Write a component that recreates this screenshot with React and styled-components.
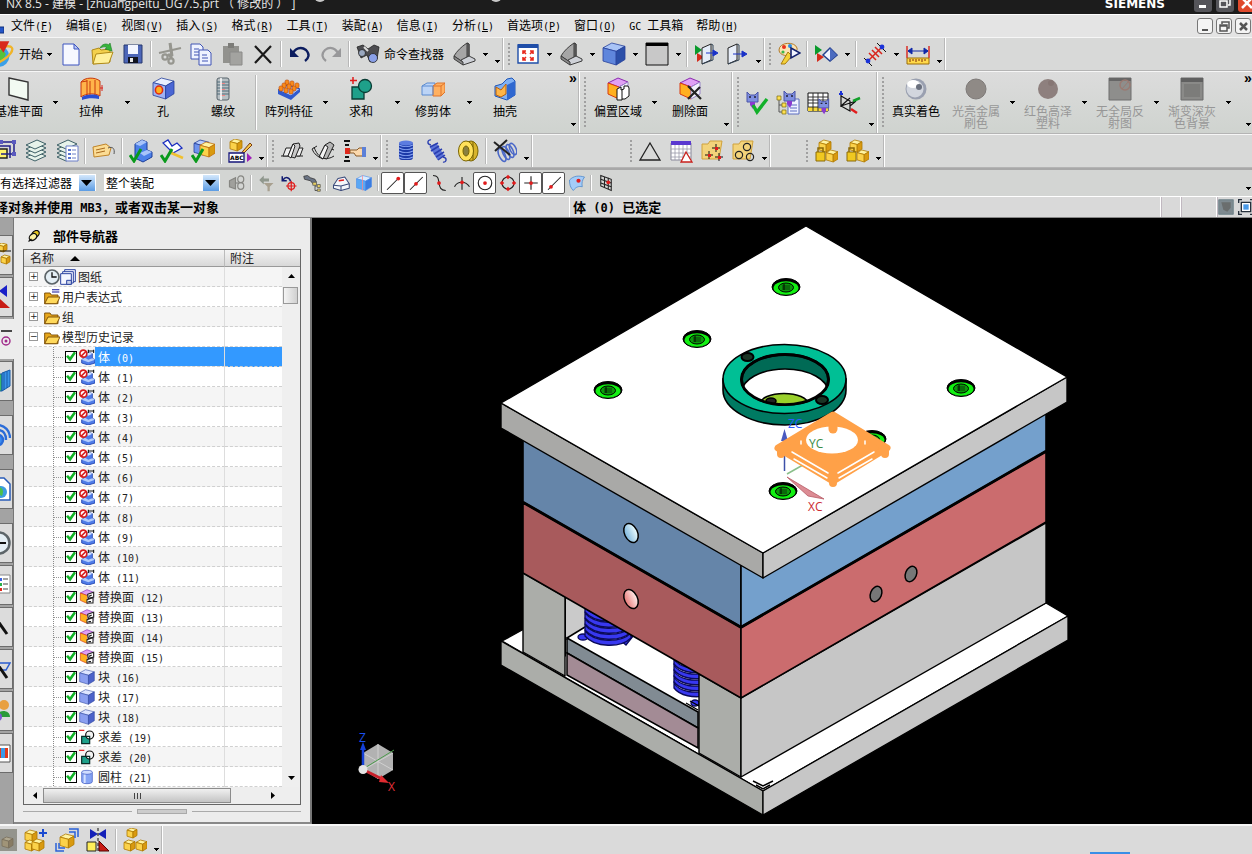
import React, { useState } from "react";
import styled, { createGlobalStyle, css } from "styled-components";

const MENUS = [
  ["文件", "F"],
  ["编辑", "E"],
  ["视图", "V"],
  ["插入", "S"],
  ["格式", "R"],
  ["工具", "T"],
  ["装配", "A"],
  ["信息", "I"],
  ["分析", "L"],
  ["首选项", "P"],
  ["窗口", "O"],
  ["GC 工具箱", null],
  ["帮助", "H"],
];

const ROOTS = [
  { name: "图纸", icon: "clock", extra: "sheets" },
  { name: "用户表达式", icon: "folderEq" },
  { name: "组", icon: "folder" },
  { name: "模型历史记录", icon: "folder", open: true },
];

const FEATURES = Array.from({ length: 22 }, (_, i) => {
  if (i < 12) return { name: `体 (${i})`, icon: "body" };
  if (i < 16) return { name: `替换面 (${i})`, icon: "replaceFace" };
  if (i < 19) return { name: `块 (${i})`, icon: "block" };
  if (i < 21) return { name: `求差 (${i})`, icon: "subtract" };
  return { name: `圆柱 (${i})`, icon: "cylinder" };
});

const BLUE = ["#b9cdfb", "#6f93ee", "#3a5cc4"];
const GOLD = ["#fff3a0", "#fbd24a", "#d99a10"];

// Small shaded box used by most of the solid-model icons
function Cube({ x = 0, y = 0, s = 20, c = BLUE, line = "#26409a" }) {
  const p = (...pts) => pts.map(([a, b]) => `${x + a * s},${y + b * s}`).join(" ");
  return (
    <g stroke={line} strokeWidth="0.8" strokeLinejoin="round">
      <polygon fill={c[0]} points={p([0, 0.22], [0.4, 0], [1, 0.15], [0.6, 0.38])} />
      <polygon fill={c[1]} points={p([0, 0.22], [0.6, 0.38], [0.6, 1], [0, 0.82])} />
      <polygon fill={c[2]} points={p([0.6, 0.38], [1, 0.15], [1, 0.75], [0.6, 1])} />
    </g>
  );
}

const goldCube = (x, y, s) => <Cube x={x} y={y} s={s} c={GOLD} line="#b07a00" />;
const greenTick = <path d="M1 16l4 6 7-12" fill="none" stroke="#0a9a1c" strokeWidth="3" />;
const layers = (
  <g fill="#e6f2ea" stroke="#3d5f66" strokeWidth="1">
    <path d="M2 18l9 4 11-5-9-4z" />
    <path d="M2 14l9 4 11-5-9-4z" />
    <path d="M2 10l9 4 11-5-9-4z" />
    <path d="M2 6l9 4 11-5-9-4z" />
  </g>
);
const seat = (
  <g stroke="#3c3c3c" strokeWidth="1" strokeLinejoin="round">
    <path d="M2 14C5 9 9 5 15 1l2 1v12l-8 5z" fill="#a6a6a6" />
    <path d="M15 1l2 1v12l-2 1z" fill="#6c6c6c" />
    <path d="M9 18l8-4 6 3v2l-12 4z" fill="#cfd2d8" />
    <path d="M2 14l9 6v3l-9-6z" fill="#8a8a8a" />
  </g>
);
const flags = (
  <g>
    <path d="M1 3l7 5-7 5z" fill="#0a9a2c" />
    <path d="M3 11l7 4-7 5z" fill="#d42a1a" />
  </g>
);
const faceCube = (
  <g strokeWidth="1" strokeLinejoin="round">
    <path d="M2 6l10-5 10 4-9 5z" fill="#e0a0f4" stroke="#8a2ab0" />
    <path d="M2 6l11 4v12L2 17z" fill="#ffb020" stroke="#d83a10" />
    <path d="M13 10l9-5v12l-9 5z" fill="#f2f2fa" stroke="#9a86c8" />
  </g>
);
const pin = (
  <g>
    <path d="M2 1l3 3h5l3-3v10H2z" fill="#7f8fe0" stroke="#4a55a8" />
    <path d="M4 6h2M9 6h2" stroke="#223" strokeWidth="1.500" />
    <path d="M5 11h5v3l-2 4-3-4z" fill="#8a3ad0" />
  </g>
);
const folder = (
  <g strokeLinejoin="round" strokeWidth="1.400">
    <path d="M1 6h8l2 3h10v13H1z" fill="#e8a81c" stroke="#7a4c04" />
    <path d="M1 22l5-10h18l-5 10z" fill="#ffd95c" stroke="#7a4c04" />
  </g>
);
const goldFolder = <path d="M2 5h6l2-3h12l-3 18H2z" fill="#f3d37a" stroke="#d0a23c" />;

const GLYPHS = {
  app: (
    <g>
      <circle cx="11" cy="14" r="9" fill="#3aa0e8" />
      <path d="M5 10c3-4 9-3 12 2-2 6-5 8-8 9-2-4-2-7-4-11z" fill="#55c23a" />
      <ellipse cx="12" cy="13" rx="12" ry="5" transform="rotate(-32 12 13)" fill="none" stroke="#f0b428" strokeWidth="2" />
      <path d="M8 1h12l-5 10z" fill="#d8281c" />
    </g>
  ),
  menuDot: <path d="M12 13h12v6h-8z" fill="#2456c8" stroke="#10307a" />,
  newFile: (
    <g stroke="#3d55c0" strokeLinejoin="round">
      <path d="M4 2h11l5 5v16H4z" fill="#f6f8ff" />
      <path d="M15 2v5h5z" fill="#b9c6f4" />
    </g>
  ),
  open: (
    <g strokeLinejoin="round">
      <path d="M2 8l7-2 2 2 9-1v13L3 22z" fill="#f3d04c" stroke="#b08a18" />
      <path d="M3 22l3-10 17-2-4 11z" fill="#fff09a" stroke="#b08a18" />
      <path d="M10 6c2-4 6-5 9-3l1-2 2 8-7-2 2-1c-2-2-4-1-7 0z" fill="#35b53a" stroke="#187a20" strokeWidth="0.6" />
    </g>
  ),
  save: (
    <g>
      <path d="M3 3h18v18H3z" fill="#4c66b8" stroke="#26386e" />
      <path d="M7 3h10v9H7z" fill="#f2f5ff" />
      <path d="M7 15h10v6H7z" fill="#10131f" />
      <path d="M9 16h3v4H9z" fill="#e6e6e6" />
    </g>
  ),
  cut: (
    <g fill="none" stroke="#96968f" strokeWidth="2.200">
      <path d="M12 1l2 13M1 11l22-5" />
      <path d="M12 1l2 13M10 12l4 4" strokeWidth="3" />
      <circle cx="7" cy="15" r="2.600" />
      <circle cx="13" cy="19" r="2.600" />
    </g>
  ),
  copy: (
    <g fill="#eef2ff" stroke="#4054b4">
      <path d="M2 2h9l3 3v12H2z" />
      <path d="M5 7h5M5 10h6M5 13h6" />
      <path d="M10 8h9l3 3v12H10z" />
      <path d="M13 13h5M13 16h6M13 19h6" />
    </g>
  ),
  paste: (
    <g fill="#92928e">
      <path d="M3 4h16v17H3z" />
      <path d="M8 1h6v5H8z" fill="#7c7c78" />
      <path d="M10 10h12v13H10z" fill="#a3a3a0" stroke="#8a8a88" />
    </g>
  ),
  remove: <path d="M4 4l16 17M20 4L4 21" stroke="#1a1a1a" strokeWidth="2.2" />,
  undo: (
    <g>
      <path d="M4 13c3-7 9-9 14-5 4 4 3 8-1 11" fill="none" stroke="#0b1c5e" strokeWidth="2.400" />
      <path d="M2 6v9h9z" fill="#0b1c5e" />
    </g>
  ),
  redo: (
    <g>
      <path d="M20 13C17 6 11 4 6 8c-4 4-3 8 1 11" fill="none" stroke="#98989a" strokeWidth="2.200" />
      <path d="M22 6v9h-9z" fill="#98989a" />
    </g>
  ),
  finder: (
    <g stroke="#222" strokeWidth="0.8">
      <path d="M1 5l6-2 5 4 6-4 5 2-2 12-7 3-3-7-6 3z" fill="#4c4c50" />
      <circle cx="17" cy="16" r="4.5" fill="#8aa0e8" />
      <circle cx="6" cy="11" r="3.5" fill="#9aa8c0" />
      <path d="M8 5l4 4" stroke="#ddd" strokeWidth="2" />
    </g>
  ),
  seat,
  fit: (
    <g>
      <path d="M2 3h20v18H2z" fill="#fff" stroke="#1f4ea8" strokeWidth="1.4" />
      <path d="M2 2h20v4H2z" fill="#1f4ea8" />
      <path d="M10 12L7 9m0 3V9h3M14 12l3-3m-3 0h3v3M10 15l-3 3m0-3v3h3M14 15l3 3m-3 0h3v-3" fill="none" stroke="#e8281c" strokeWidth="1.6" />
    </g>
  ),
  cube: <Cube x={1} y={1} s={22} c={["#a9c4f6", "#5f86dc", "#2b4fa8"]} />,
  frame: (
    <g>
      <path d="M1 1h22v22H1z" fill="#c8c8c8" stroke="#111" />
      <path d="M1 1h22v3H1z" fill="#000" />
    </g>
  ),
  planeFlags: (
    <g>
      {flags}
      <path d="M8 6l9-4v16l-9 4z" fill="#e4ecf8" stroke="#222" />
      <path d="M17 2l2 1v15l-11 4" fill="none" stroke="#345" />
      <path d="M12 11h8M19 8l5 3-5 3z" fill="#1a32c8" stroke="#1a32c8" />
    </g>
  ),
  planeArrow: (
    <g>
      <path d="M3 6l9-4v16l-9 4z" fill="#e8eef8" stroke="#222" />
      <path d="M12 2l2 1v15L3 22" fill="none" stroke="#345" />
      <path d="M8 12h10M17 9l5 3-5 3z" fill="#1a32c8" stroke="#1a32c8" />
    </g>
  ),
  palette: (
    <g>
      <path d="M2 8c0-8 16-9 18-2 1 4-4 3-5 6-2 3-13 2-13-4z" fill="#fbe3b4" stroke="#b07a28" />
      <circle cx="7" cy="5" r="2" fill="#e8321c" />
      <circle cx="13" cy="4" r="2" fill="#2a8ce8" />
      <circle cx="6" cy="10" r="1.6" fill="#3ab84a" />
      <path d="M4 22l7-12 4 4-7 8z" fill="#f4d23a" stroke="#a87c10" />
      <path d="M14 6l9 5-9 5z" fill="#f2f5ff" stroke="#12206e" strokeWidth="1.6" />
    </g>
  ),
  flagDiamond: (
    <g>
      {flags}
      <path d="M9 13l7-7 7 7-7 6z" fill="#f2f5ff" stroke="#24408e" strokeWidth="1.5" />
      <path d="M16 6l7 7-7 6z" fill="#4c6cc0" />
    </g>
  ),
  measure: (
    <g>
      <path d="M4 20L20 4" stroke="#d8241c" strokeWidth="1.5" />
      <path d="M6 11l7 7M9 8l7 7M12 5l7 7" stroke="#d8241c" strokeWidth="1.5" />
      <path d="M1 16l8 8M14 1l9 9" stroke="#111" />
      <circle cx="5" cy="19" r="2.4" fill="#1a32d8" />
      <circle cx="19" cy="5" r="2.4" fill="#1a32d8" />
    </g>
  ),
  ruler: (
    <g>
      <path d="M1 4v12M23 4v12" stroke="#d8241c" strokeWidth="1.4" />
      <path d="M2 9h20M2 9l4-3v6zM22 9l-4-3v6z" fill="#1028a8" stroke="#1028a8" />
      <path d="M1 16h22v6H1z" fill="#ffd94a" stroke="#9a6c08" />
      <path d="M4 17v3M7 17v2M10 17v3M13 17v2M16 17v3M19 17v2" stroke="#7a2a08" />
    </g>
  ),
  datumPlane: <path d="M2 1l19 4v18L2 18z" fill="#f2faf2" stroke="#333" strokeWidth="1.4" />,
  extrude: (
    <g stroke="#c8380c">
      <path d="M2 5c4-5 14-5 19-1v15c-5-3-14-3-19 1z" fill="#ffb44a" />
      <path d="M8 3v16M11 4v15M16 3v15M2 5l6-1" fill="none" />
      <path d="M3 20c5-3 13-3 17-1v3c-5-1-12-1-17 1z" fill="#2a4ed0" stroke="none" />
      <path d="M21 11h3M23 8v6" stroke="#d8241c" />
    </g>
  ),
  hole: (
    <g>
      <Cube x={2} y={1} s={21} c={["#e8eefe", "#9fb2f4", "#4a66d4"]} />
      <ellipse cx="8" cy="13" rx="3.6" ry="4" fill="#ffb020" stroke="#e02a10" strokeWidth="1.6" />
    </g>
  ),
  thread: (
    <g>
      <rect x="6" y="1" width="12" height="22" rx="2" fill="#b8c0c4" stroke="#56626a" />
      <path d="M6 5h12M6 8h12M6 11h12M6 14h12M6 17h12" stroke="#4e6a78" />
      <path d="M9 6.500h5M9 12.500h5M9 18.500h5" stroke="#e88" />
      <path d="M10 1v22" stroke="#fff" strokeWidth="1.5" />
    </g>
  ),
  pattern: (
    <g>
      <path d="M1 13l10-5 12 4-9 7z" fill="#a9c2f8" stroke="#2a4ab0" />
      <path d="M1 13l13 6v4L1 17zM14 19l9-7v3l-9 8z" fill="#2f5ad0" />
      <g fill="#f88a1c" stroke="#b8480c" strokeWidth="0.6">
        {[[9, 5], [14, 6], [19, 8], [6, 8], [11, 9], [16, 11], [3, 11], [8, 13], [13, 14]].map(([x, y]) => (
          <rect key={`${x}-${y}`} x={x - 1} y={y - 2} width="4" height="5" rx="1.500" />
        ))}
      </g>
    </g>
  ),
  unite: (
    <g>
      <path d="M3 10h12v12H3z" fill="#1ea08a" stroke="#0a3c34" strokeWidth="1.300" />
      <circle cx="16" cy="9" r="6.500" fill="#1ea08a" stroke="#0a3c34" strokeWidth="1.300" />
      <path d="M4 0v7M1 3.500h7" stroke="#e01c1c" strokeWidth="1.500" />
    </g>
  ),
  trim: (
    <g>
      <path d="M1 9l5-3h8v12H1z" fill="#bcd4f6" stroke="#5a8ad0" />
      <path d="M12 9l4-3h8v9l-4 4h-8z" fill="#ffb060" stroke="#e0742a" />
      <path d="M12 9h8v10M20 9l4-3" fill="none" stroke="#e0742a" />
      <path d="M1 9h11v9" fill="none" stroke="#5a8ad0" />
    </g>
  ),
  shell: (
    <g strokeLinejoin="round">
      <path d="M2 9l7-2 5-5 5-1 3 3v14l-8 5-12-4z" fill="#7fb0f4" stroke="#1f56b8" />
      <path d="M14 8l8-4v14l-8 5z" fill="#2f68d0" />
      <path d="M3 10l5 3 5-6v10l-5 3-5-2z" fill="#ffb648" stroke="#b8600c" />
    </g>
  ),
  offset: (
    <g>
      {faceCube}
      <path d="M11 12l4-2v3l3-1v-3h4l1 2v8l-4 3h-3v1h-5z" fill="#fff" stroke="#111" />
      <path d="M16 13v9" stroke="#111" />
    </g>
  ),
  deleteFace: (
    <g>
      {faceCube}
      <path d="M10 9l13 13M22 10L10 22" stroke="#222" strokeWidth="2.200" />
    </g>
  ),
  pinTick: (
    <g>
      {pin}
      <path d="M8 14l4 7L22 8" fill="none" stroke="#12b02a" strokeWidth="3.400" />
    </g>
  ),
  pinTree: (
    <g>
      <path d="M12 8h11v15H12z" fill="#eef2ff" stroke="#5a6cc0" />
      <path d="M14 14h7M14 17h7M14 20h7" stroke="#5a6cc0" />
      <path d="M3 6v15h5M3 14h5" fill="none" stroke="#555" />
      <path d="M1 5h4v4H1zM6 12h4v4H6zM6 19h4v4H6z" fill="#ffe050" stroke="#7a6a10" strokeWidth="0.700" />
      <g transform="translate(6 -1)">{pin}</g>
    </g>
  ),
  pinTable: (
    <g>
      <path d="M1 2h20v18H1z" fill="#fff" stroke="#111" />
      <path d="M1 16h20v4H1z" fill="#f6d83a" />
      <path d="M1 6h20M1 9h20M1 12h20M1 16h20M6 2v18M11 2v18M16 2v18" stroke="#222" strokeWidth="0.900" />
      <g transform="translate(10 7) scale(0.9)">{pin}</g>
    </g>
  ),
  csys: (
    <g fill="none" stroke="#111" strokeWidth="1.200">
      <path d="M3 16V3M3 5l9 5v10l-9-5 9-8M3 15l15-5M12 15l6-5" />
      <path d="M3 0v4M1 3h4" stroke="#1a32d8" strokeWidth="2" />
      <path d="M15 10l7-3" stroke="#12a02a" strokeWidth="2.500" />
      <path d="M13 18l6 4" stroke="#e01c1c" strokeWidth="2.500" />
    </g>
  ),
  sphere: (
    <g>
      <circle cx="12" cy="12" r="10.500" fill="#9aa0b0" />
      <circle cx="11" cy="12" r="8.500" fill="#d2d6de" />
      <ellipse cx="9" cy="7" rx="6" ry="4" fill="#fff" />
      <circle cx="15" cy="10" r="3" fill="#6a707e" />
    </g>
  ),
  metal: <circle cx="12" cy="12" r="10" fill="#8f8a86" stroke="#7e7a78" />,
  plastic: (
    <g>
      <circle cx="12" cy="12" r="10" fill="#8e807e" />
      <circle cx="15" cy="6" r="3" fill="#867674" />
    </g>
  ),
  noReflect: (
    <g>
      <path d="M1 1h22v22H1z" fill="#8e8e8c" stroke="#6e6e6e" />
      <path d="M1 1h22v3H1z" fill="#666" />
      <circle cx="17" cy="8" r="5" fill="none" stroke="#9a7a72" strokeWidth="1.500" />
      <path d="M14 12l6-7" stroke="#9a7a72" />
    </g>
  ),
  gradientBg: (
    <g>
      <path d="M1 1h22v22H1z" fill="#8a8a88" stroke="#6a6a6a" />
      <path d="M1 1h22v4H1z" fill="#606060" />
      <path d="M4 7h16v13H4z" fill="#7c7c7a" />
    </g>
  ),
  group: (
    <g>
      <path d="M2 10h12v9H2z" fill="#fff36a" stroke="#222" strokeWidth="1.500" />
      <path d="M8 3h13v12H8M3 7h14v12" fill="none" stroke="#20208a" strokeWidth="1.500" />
      <path d="M19 1h4v4h-4zM19 13h4v4h-4zM6 1h4v4H6z" fill="#5a5ac0" />
    </g>
  ),
  layers,
  layerList: (
    <g>
      {layers}
      <path d="M11 7h12v15H11z" fill="#fff" stroke="#6a7ec8" />
      <path d="M13 10h3v2h-3zM13 14h3v2h-3zM13 18h3v2h-3z" fill="#5a76d0" />
      <path d="M17 11h4M17 15h4M17 19h4" stroke="#6a7ec8" />
    </g>
  ),
  tag: (
    <g>
      <path d="M1 8l13-3 5 4-2 7-15 2z" fill="#fbdc94" stroke="#c08428" />
      <path d="M4 11l9-2M4 14l9-2" stroke="#a8681c" />
      <path d="M16 9c5-2 7 1 6 6" fill="none" stroke="#555" />
    </g>
  ),
  bodyTick: (
    <g>
      <path d="M6 5l7-4 5 2v8l5 2v5l-9 5-8-4z" fill="#4c80e8" stroke="#1c3e9a" />
      <path d="M6 5l7-4 5 2-7 4z" fill="#a8c4fa" />
      <path d="M11 14l7-3 5 2-8 4z" fill="#a8c4fa" />
      {greenTick}
    </g>
  ),
  sketchTick: (
    <g>
      <path d="M3 4l5-3 4 6 5-3 5 5-9 5z" fill="#fff" stroke="#1a2ec0" strokeWidth="1.300" />
      <path d="M9 13l14 6" stroke="#f0c030" strokeWidth="2.500" />
      {greenTick}
    </g>
  ),
  cubeTick: (
    <g>
      <Cube x={3} y={1} s={15} />
      <Cube x={9} y={3} s={15} c={GOLD} line="#c0700c" />
      {greenTick}
    </g>
  ),
  rename: (
    <g>
      {goldCube(2, 0, 12)}
      <path d="M22 4l-7 8-2 3 3-1 8-8z" fill="#f6c84a" stroke="#7a3a10" />
      <path d="M1 14h15v9H1z" fill="#fff" stroke="#14147a" strokeWidth="1.300" />
      <text x="2" y="21" fontFamily="DejaVu Sans" fontWeight="bold" fontSize="6">ABC</text>
      <path d="M19 14l5 5-5 4z" fill="#a020b8" />
    </g>
  ),
  sweep: (
    <g stroke="#222" strokeLinejoin="round">
      <path d="M1 17h7M17 17h6" />
      <path d="M12 9h11l-3 8H3l3-8h6" fill="#eee" />
      <path d="M8 17l5-12 6-1 1 3-5 12z" fill="#c8c8c8" />
      <path d="M8 17l5-12 2 2-4 12z" fill="#f4f4f4" />
    </g>
  ),
  variational: (
    <g stroke="#222" strokeLinejoin="round">
      <path d="M1 10c4 10 15 12 22 7M1 10l5-3M18 9l5 2" fill="none" />
      <path d="M8 18l6-12 5-3 4 3-7 14z" fill="#b4b4b4" />
      <path d="M8 18l6-12 3 2-5 12z" fill="#f4f4f4" />
      <path d="M3 8c2 6 5 9 9 12" fill="none" />
    </g>
  ),
  pointer: (
    <g>
      <path d="M2 2h6M2 22h6M3 6h4M3 18h4" stroke="#111" strokeWidth="2" />
      <path d="M3 9h5v6H3z" fill="#e0281c" />
      <path d="M8 11h7l2-2h4v8h-7l-2-3H8z" fill="#fbd8ac" stroke="#8a5a28" />
      <path d="M20 8h4v10h-4z" fill="#5c80d8" />
    </g>
  ),
  coil: (
    <g>
      <rect x="5" y="3" width="14" height="18" rx="3" fill="#1c3aa8" />
      <path d="M5 6c4 2 10 2 14 0M5 9c4 2 10 2 14 0M5 12c4 2 10 2 14 0M5 15c4 2 10 2 14 0M5 18c4 2 10 2 14 0" fill="none" stroke="#8aa6f4" strokeWidth="1.200" />
      <ellipse cx="12" cy="4" rx="7" ry="2.500" fill="#5c7ce0" />
    </g>
  ),
  tension: (
    <g fill="none" stroke="#2a3eb0">
      <path d="M8 6l8 13" stroke="#5c74d8" strokeWidth="8" />
      <path d="M5 8l8-4M6 12l8-5M9 15l8-5M11 18l8-5M13 21l7-5" strokeWidth="1.500" />
      <path d="M6 6C1 5 3 0 6 1M18 18c5 1 3 6 0 5" strokeWidth="1.300" />
    </g>
  ),
  disc: (
    <g stroke="#7a6400">
      <ellipse cx="15" cy="12" rx="7" ry="10" fill="#d8b42c" />
      <path d="M13 2v20M17 3v18" />
      <ellipse cx="10" cy="12" rx="7.500" ry="10" fill="#ffe15a" />
      <ellipse cx="10" cy="12" rx="3" ry="5" fill="#8a8040" />
    </g>
  ),
  springEdit: (
    <g fill="none">
      <g stroke="#4a68c8" strokeWidth="1.600">
        <ellipse cx="9" cy="16" rx="3" ry="7" transform="rotate(-25 9 16)" />
        <ellipse cx="13" cy="14" rx="3" ry="7" transform="rotate(-25 13 14)" />
        <ellipse cx="17" cy="12" rx="3" ry="7" transform="rotate(-25 17 12)" />
        <ellipse cx="20" cy="10" rx="3" ry="6" transform="rotate(-25 20 10)" />
      </g>
      <path d="M1 3l16 13M2 12L14 1" stroke="#222" strokeWidth="2" />
    </g>
  ),
  triangle: <path d="M12 4L22 21H2z" fill="none" stroke="#222" strokeWidth="1.300" />,
  gridTriangle: (
    <g>
      <path d="M2 4h20v17H2z" fill="#fff" stroke="#889" />
      <path d="M2 2h20v4H2z" fill="#5a38d0" />
      <path d="M2 10h20M2 14h20M2 18h20M6 6v15M10 6v15M14 6v15M18 6v15" stroke="#99a" strokeWidth="0.800" />
      <path d="M17 13l6 10H12z" fill="#fff" stroke="#c8201c" strokeWidth="1.300" />
    </g>
  ),
  folderPoints: (
    <g>
      {goldFolder}
      <path d="M16 5v8M12 9h8M9 12v8M5 16h8M19 14v8M15 18h8" stroke="#111" />
      <path d="M15 8h3v3h-3zM8 15h3v3H8zM18 17h3v3h-3z" fill="#e01c1c" />
    </g>
  ),
  folderCircles: (
    <g>
      {goldFolder}
      <g fill="none" stroke="#222" strokeWidth="1.200">
        <circle cx="16" cy="8" r="3.600" />
        <circle cx="8" cy="16" r="3.600" />
        <circle cx="19" cy="18" r="3.600" />
      </g>
    </g>
  ),
  lockCubes: (
    <g>
      {goldCube(5, 1, 12)}
      {goldCube(12, 11, 12)}
      <path d="M2 13h9v9H2z" fill="#f0c820" stroke="#8a6a08" />
      <path d="M4 13V9h5v4" fill="none" stroke="#8a6a08" strokeWidth="1.500" />
    </g>
  ),
  greyLink: (
    <g fill="#a0a09c" stroke="#868682" strokeWidth="1.600">
      <path d="M2 9l8-4v15l-8-3z" />
      <path d="M10 12h4" />
      <ellipse cx="17" cy="7" rx="4" ry="4.500" fill="none" />
      <ellipse cx="17" cy="16" rx="4" ry="4.500" fill="none" />
    </g>
  ),
  greyFilter: (
    <g fill="#90988e">
      <path d="M3 8l6-6v4h7v4H9v4z" />
      <path d="M9 12h13l-5 5v6h-3v-6z" fill="#a8a090" />
    </g>
  ),
  snap: (
    <g fill="none">
      <path d="M3 3v6h6M4 8c3-5 9-4 10 2" stroke="#101a70" strokeWidth="2" />
      <circle cx="15" cy="16" r="4.500" stroke="#e01c1c" strokeWidth="1.600" />
      <path d="M15 9v14M8 16h14" stroke="#e01c1c" strokeWidth="1.600" />
    </g>
  ),
  browse: (
    <g>
      <path d="M1 3l5-1 4 3 6 2 2 4-4 3-4-5-8-2z" fill="#6a7484" stroke="#333" />
      <path d="M16 13v9h4M16 16h4" fill="none" stroke="#333" />
      <path d="M13 11h5v4h-5zM19 14h4v4h-4zM19 20h4v3h-4z" fill="#e8d060" stroke="#555" />
    </g>
  ),
  house: (
    <g strokeLinejoin="round">
      <path d="M2 15l6-9 9-2 6 9v6l-11 3-10-3z" fill="#f4f6fa" stroke="#3a4a7a" strokeWidth="1.400" />
      <path d="M12 22v-6l11-3M12 16L2 15" fill="none" stroke="#3a4a7a" strokeWidth="1.400" />
      <path d="M9 9l7-1" stroke="#e01c1c" strokeWidth="2" />
    </g>
  ),
  glassCube: (
    <g>
      <Cube x={2} y={2} s={20} c={["#d8ecff", "#5aa8f4", "#3a7ce0"]} line="#4a8ae8" />
      <path d="M10 2v20" stroke="#f88" />
    </g>
  ),
  endPoint: (
    <g>
      <path d="M4 21L19 6" stroke="#222" strokeWidth="1.400" />
      <circle cx="19" cy="6" r="2.500" fill="#e01c1c" />
    </g>
  ),
  midPoint: (
    <g>
      <path d="M4 21L21 4" stroke="#222" strokeWidth="1.400" />
      <circle cx="12" cy="13" r="2.500" fill="#e01c1c" />
    </g>
  ),
  knot: (
    <g>
      <path d="M4 2c7 0 7 4 8 10s2 10 9 10" fill="none" stroke="#222" strokeWidth="1.500" />
      <circle cx="12" cy="12" r="2.500" fill="#e01c1c" />
    </g>
  ),
  cross: (
    <g>
      <path d="M2 17c4-8 15-8 20 0M12 4v17" fill="none" stroke="#222" strokeWidth="1.500" />
      <circle cx="12" cy="11" r="2.500" fill="#e01c1c" />
    </g>
  ),
  center: (
    <g>
      <circle cx="12" cy="12" r="9" fill="none" stroke="#222" strokeWidth="1.500" />
      <circle cx="12" cy="12" r="2.500" fill="#e01c1c" />
    </g>
  ),
  quadrant: (
    <g>
      <circle cx="12" cy="12" r="8" fill="none" stroke="#222" strokeWidth="1.500" />
      <path d="M12 1l3 3-3 3-3-3zM12 17l3 3-3 3-3-3zM1 12l3-3 3 3-3 3zM17 12l3-3 3 3-3 3z" fill="#e01c1c" />
    </g>
  ),
  existing: (
    <g>
      <path d="M12 3v18M3 12h18" stroke="#222" strokeWidth="1.500" />
      <circle cx="12" cy="12" r="2.500" fill="#e01c1c" />
    </g>
  ),
  onCurve: (
    <g>
      <path d="M4 21L21 4" stroke="#222" strokeWidth="1.400" />
      <circle cx="8" cy="17" r="2.500" fill="#e01c1c" />
    </g>
  ),
  onFace: (
    <g>
      <path d="M2 8c6-6 12-6 20-4-3 4-4 8-3 13-5-1-8 0-12 5-4-4-5-8-5-14z" fill="#a4ccf8" stroke="#4a86c8" />
      <circle cx="14" cy="9" r="2.800" fill="#e01c1c" />
    </g>
  ),
  gridSnap: (
    <g>
      <path d="M5 2l14 5v15L5 16z" fill="none" stroke="#222" strokeWidth="1.400" />
      <path d="M10 4v14M15 5v15M5 7l14 5M5 12l14 5" stroke="#222" strokeWidth="1.400" />
      <circle cx="15" cy="11" r="2.500" fill="#e01c1c" />
    </g>
  ),
  clock: (
    <g>
      <circle cx="12" cy="12" r="10.500" fill="#e4eef4" stroke="#5c6468" strokeWidth="2.500" />
      <path d="M12 5v7h7" fill="none" stroke="#111" strokeWidth="2" />
    </g>
  ),
  sheets: (
    <g fill="#f4f6ff" stroke="#2c44a0" strokeWidth="1.500">
      <path d="M7 1h16v18H7z" />
      <path d="M4 4h16v17H4z" />
      <path d="M1 7h16v16H1z" />
      <path d="M10 17h7v6h-7z" fill="#c8d0e8" />
    </g>
  ),
  folder,
  folderEq: (
    <g>
      {folder}
      <path d="M12 1h11M12 4.500h11" stroke="#14149a" strokeWidth="1.600" />
    </g>
  ),
  body: (
    <g>
      <path d="M4 16l5-4V8l6-3 5 2v7l4 2v5l-10 3-10-3z" fill="#4f7ce8" stroke="#1c3ea8" strokeWidth="1.200" />
      <path d="M9 8l6-3 5 2-6 3z" fill="#cfe0ff" />
      <path d="M4 16l5-3 5 3 6-2 4 2-10 4z" fill="#b4ccfb" />
      <path d="M14 3h8M14 1v5M22 1v5" stroke="#111" strokeWidth="1.600" />
      <circle cx="6.500" cy="7" r="5.200" fill="#fff" stroke="#d81c1c" strokeWidth="2.600" />
      <path d="M3 11l8-8" stroke="#d81c1c" strokeWidth="2.400" />
    </g>
  ),
  replaceFace: (
    <g>
      {faceCube}
      <path d="M13 8l9-3v7l-8 2zM12 16l9-3v8h-9z" fill="#fff" stroke="#222" strokeWidth="1.600" />
      <path d="M15 11l4-2M14 19h4" stroke="#222" strokeWidth="2" />
    </g>
  ),
  block: <Cube x={1} y={1} s={22} c={["#dfe6ff", "#8b9ff0", "#4c62c8"]} />,
  subtract: (
    <g strokeWidth="1.800">
      <path d="M4 11h12v11H4z" fill="#1ea08a" stroke="#0a2c28" />
      <circle cx="16" cy="9" r="6" fill="#f4f4f4" stroke="#111" />
      <path d="M10 11h6v5" fill="none" stroke="#0a2c28" />
      <path d="M0 2h8" stroke="#e01c1c" />
    </g>
  ),
  cylinder: (
    <g stroke="#3a54c0">
      <path d="M4 5v14c0 4 16 4 16 0V5z" fill="#86a4f4" />
      <path d="M7 7h3v14H7z" fill="#d4e0ff" stroke="none" />
      <ellipse cx="12" cy="5" rx="8" ry="3" fill="#cfdcff" />
    </g>
  ),
  pushpin: (
    <g stroke="#111" strokeWidth="2.400">
      <ellipse cx="15" cy="8" rx="8" ry="6" transform="rotate(-35 15 8)" fill="#e8c81c" />
      <ellipse cx="10" cy="14" rx="8" ry="6" transform="rotate(-35 10 14)" fill="#fff4a0" />
      <path d="M7 18l-6 5" />
    </g>
  ),
  addComp: (
    <g>
      {goldCube(1, 2, 12)}
      {goldCube(1, 12, 11)}
      {goldCube(8, 11, 12)}
      <path d="M19 1v8M15 5h8" stroke="#1a4ad0" strokeWidth="2" />
    </g>
  ),
  moveComp: (
    <g>
      {goldCube(5, 6, 14)}
      <path d="M14 1h9v8M14 4h6v6M1 15v8h8M4 15v5h6" fill="none" stroke="#2a62d8" strokeWidth="1.500" />
    </g>
  ),
  mirror: (
    <g>
      <path d="M4 1l8 5-8 5zM20 1l-8 5 8 5z" fill="#1420b8" />
      <path d="M12 0v24" stroke="#111" strokeDasharray="3 2" />
      <path d="M1 14h9v9H1z" fill="#ffee5a" stroke="#222" />
      <path d="M13 13l10 10H13z" fill="#c81c14" stroke="#500" />
    </g>
  ),
  threeCubes: (
    <g>
      {goldCube(4, 0, 10)}
      {goldCube(1, 12, 11)}
      {goldCube(13, 12, 11)}
    </g>
  ),
  greyCubes: (
    <g>
      <path d="M0 1h24v22H0z" fill="#94948c" />
      <Cube x={9} y={9} s={11} c={["#b0a890", "#a09478", "#887c64"]} line="#7a705c" />
    </g>
  ),
  tabAssembly: (
    <g>
      {goldCube(11, 0, 9)}
      {goldCube(14, 12, 9)}
      <path d="M13 8h11" fill="none" stroke="#111" />
    </g>
  ),
  tabConstraint: (
    <g>
      <path d="M12 6l8-6v12z" fill="#1a20c8" />
      <path d="M12 13l11 10H12z" fill="#c81c14" />
      <path d="M12 0v24" stroke="#111" strokeDasharray="3 2" />
    </g>
  ),
  tabPart: (
    <g fill="none">
      <path d="M12 4h11" stroke="#111" strokeWidth="1.500" />
      <circle cx="17" cy="14" r="4" stroke="#a02a8a" strokeWidth="1.400" />
      <circle cx="17" cy="14" r="1.500" fill="#a02a8a" />
    </g>
  ),
  tabBook: (
    <g stroke="#1a5ca8">
      <path d="M9 5h6v17H9z" fill="#3cba6a" />
      <path d="M15 4l8-3v16l-8 5z" fill="#3a94e8" />
      <path d="M17 3v18M20 2v17" />
    </g>
  ),
  tabSignal: (
    <g fill="none" stroke="#2a6cd8" strokeWidth="2.400">
      <circle cx="11" cy="17" r="5" fill="#3a8cf0" />
      <path d="M10 7c6 0 9 4 9 10M10 2c8 0 13 6 13 13" />
    </g>
  ),
  tabPage: (
    <g>
      <path d="M8 1h9l6 6v16H8z" fill="#fff" stroke="#2a5cb8" strokeWidth="1.500" />
      <circle cx="14" cy="15" r="6" fill="#3c9ce0" />
      <path d="M12 10c4 1 5 4 3 9-3-1-4-4-3-9z" fill="#4cc04a" />
    </g>
  ),
  tabRoles: (
    <g>
      <path d="M8 2h15v18H8z" fill="#fff" stroke="#888" />
      <path d="M11 5h4v3h-4z" fill="#3a62e0" />
      <path d="M11 10h4v3h-4z" fill="#2ab04a" />
      <path d="M11 15h4v3h-4z" fill="#e02a1c" />
      <path d="M16 6h5M16 11h5M16 16h5" stroke="#444" />
    </g>
  ),
  tabWand: <path d="M10 5l10 14" stroke="#111" strokeWidth="3" />,
  tabWandBlue: (
    <g fill="none">
      <path d="M10 13h9l4-7H12z" stroke="#2a5cd0" strokeWidth="1.500" />
      <path d="M11 8l9 13" stroke="#111" strokeWidth="3" />
    </g>
  ),
  tabPeople: (
    <g>
      <circle cx="17" cy="6" r="5" fill="#e8a040" />
      <path d="M10 18c0-8 13-8 13 0z" fill="#2a9a3a" />
      <circle cx="11" cy="18" r="4" fill="#7a5ad0" />
    </g>
  ),
  tabPhoto: (
    <g>
      <path d="M6 4h17v17H6z" fill="#fff" stroke="#555" />
      <path d="M8 7h13v10H8z" fill="#3a9ae8" />
      <path d="M8 7h6v10H8zM18 7h3v10h-3z" fill="#e03a1c" />
    </g>
  ),
  trackGrey: (
    <g>
      <path d="M1 1h22v22H1z" fill="#7e8a90" stroke="#5c747c" />
      <path d="M5 5h14v8l-5 6-6-3z" fill="#6a6e6e" />
    </g>
  ),
  screen: (
    <g fill="none" stroke="#26303c" strokeWidth="2">
      <path d="M1 6V1h5M18 1h5v5M23 18v5h-5M6 23H1v-5" />
      <path d="M5 5h14v14H5z" fill="#fff" />
      <path d="M8 8h8v8H8z" fill="#4a9ae8" stroke="none" />
    </g>
  ),
};

function Icon({ name, size = 24 }) {
  return (
    <svg width={size} height={size} viewBox="0 0 24 24" aria-hidden="true">
      {GLYPHS[name]}
    </svg>
  );
}

// Latin runs are set in a half-width face next to the full-width characters
function Text({ children }) {
  return children
    .split(/([\x20-\x7e]+)/)
    .map((run, i) => (i % 2 ? <Latin key={i}>{run}</Latin> : run));
}

function Arrow() {
  return (
    <svg width="5" height="3" viewBox="0 0 5 3" shapeRendering="crispEdges" aria-hidden="true">
      <path d="M0 0h5L2.500 3z" />
    </svg>
  );
}

const Drop = ({ label = "选项" }) => (
  <DropButton aria-label={label}>
    <Arrow />
  </DropButton>
);

const End = () => (
  <EndButton aria-label="工具条选项">
    <Arrow />
  </EndButton>
);

const Overflow = ({ chevron, edge }) => (
  <OverflowButton $edge={edge} aria-label="更多">
    <span>{chevron ? "»" : ""}</span>
    <Arrow />
  </OverflowButton>
);

// Names are rendered left to right; "|" is a divider, "v" a drop-down arrow
function Tools({ items }) {
  return items.map((item, i) => {
    if (item === "|") return <Divider key={i} />;
    if (item === "v") return <Drop key={i} />;
    return (
      <ToolButton key={i} aria-label={item}>
        <Icon name={item} />
      </ToolButton>
    );
  });
}

function BigTool({ icon, label, disabled }) {
  return (
    <BigButton disabled={disabled}>
      <Icon name={icon} />
      <span>{label}</span>
    </BigButton>
  );
}

function Screw({ x, y }) {
  return (
    <g transform={`translate(${x} ${y})`} stroke="#000">
      <ellipse rx="14" ry="8.500" fill="#000" />
      <ellipse cy="1" rx="12.500" ry="6.800" fill="#12f012" stroke="none" />
      <ellipse cy="0.500" rx="7.500" ry="4.500" fill="#0a9a0a" />
      <path d="M-4-2h8v5h-8z" fill="#0a6a0a" stroke="none" />
      <path d="M-2-3v6" />
    </g>
  );
}

function MoldModel() {
  return (
    <Scene viewBox="312 218 940 606" role="img" aria-label="模架装配模型">
      <defs>
        <clipPath id="bore">
          <ellipse cx="785" cy="379.500" rx="43.500" ry="25" />
        </clipPath>
        <clipPath id="opening">
          <path d="M566 597l133 77v79l-133-77z" />
        </clipPath>
        <linearGradient id="blueHole">
          <stop offset="0" stopColor="#7ab4dc" />
          <stop offset="1" stopColor="#f0ffff" />
        </linearGradient>
        <linearGradient id="redHole">
          <stop offset="0" stopColor="#e87a78" />
          <stop offset="1" stopColor="#fff0ee" />
        </linearGradient>
      </defs>

      {/* base plate */}
      <g stroke="#000" strokeWidth="1.300" strokeLinejoin="round">
        <path d="M502 641l22-12 217 140 305-166 22 13-305 175z" fill="#fff" />
        <path d="M501 641l262 150v24L501 665z" fill="#abada9" />
        <path d="M763 791l305-175v24L763 815z" fill="#c6c6c6" />
      </g>
      <path d="M753 781l10 5 10-5M756 785l7 4 7-4" fill="none" stroke="#000" strokeWidth="1.500" />

      {/* ejector plates seen between the legs */}
      <g clipPath="url(#opening)">
        <path d="M560 590h145v170H560z" fill="#fff" />
        <path d="M565 590h22v37l-22 13z" fill="#cacaca" stroke="#000" />
        <g stroke="#000" strokeWidth="1.500">
          <path d="M567 638l18-11h30l84 60v26z" fill="#fff" stroke="none" />
          <path d="M567 638l131 74v16l-131-75z" fill="#818b93" />
          <path d="M567 653l131 75v20l-131-73z" fill="#a38b95" />
          <path d="M567 638l18-11" />
        </g>
        <g stroke="#0a0a5a" strokeWidth="1.300" fill="#3838f0">
          <ellipse cx="583" cy="637" rx="5" ry="3" />
          <path d="M620 640l14-5-8 10z" />
          {[606, 612, 618, 624, 630, 636].map((y) => (
            <path key={y} d={`M585 ${y - 5}c10 12 36 12 46 2v5c-10 10-36 10-46-2z`} />
          ))}
          {[655, 661, 667, 673, 679, 685].map((y) => (
            <path key={y} d={`M674 ${y - 2}c6 10 22 10 30 8v5c-10 2-24 0-30-8z`} />
          ))}
          <ellipse cx="695" cy="703" rx="4" ry="3" />
        </g>
        <path d="M686 703l12 7M690 701l9 5" stroke="#000" strokeWidth="1.300" />
      </g>

      {/* legs and side block */}
      <g stroke="#000" strokeWidth="1.400" strokeLinejoin="round">
        <path d="M523 573l42 24v79l-42-24z" fill="#abada9" />
        <path d="M699 674l42 24v79l-42-24z" fill="#abada9" />
        <path d="M741 698l305-175v80L741 777z" fill="#c6c6c6" />
      </g>

      {/* cavity and core plates */}
      <g stroke="#000" strokeWidth="1.600" strokeLinejoin="round">
        <path d="M523 503l218 125v70L523 573z" fill="#a85a5c" />
        <path d="M741 628l305-176v70L741 698z" fill="#cb6c6e" />
        <path d="M523 438l218 124v65L523 502z" fill="#6585a9" />
        <path d="M741 562l305-170v59L741 627z" fill="#74a0cc" />
      </g>
      <path d="M523 502l218 125 305-176" fill="none" stroke="#000" strokeWidth="2.500" />
      <g stroke="#000" strokeWidth="1.500">
        <ellipse cx="631" cy="533" rx="6.500" ry="10" transform="rotate(-25 631 533)" fill="url(#blueHole)" />
        <ellipse cx="631" cy="599" rx="6.500" ry="10" transform="rotate(-25 631 599)" fill="url(#redHole)" />
        <ellipse cx="876" cy="594" rx="5.500" ry="8" transform="rotate(22 876 594)" fill="#777" />
        <ellipse cx="911" cy="574" rx="5.500" ry="8" transform="rotate(22 911 574)" fill="#777" />
      </g>

      {/* clamping plate */}
      <g stroke="#000" strokeWidth="1.400" strokeLinejoin="round">
        <path d="M501 403l262 150v25L501 428z" fill="#a9a9a7" />
        <path d="M763 553l304-176v25L763 578z" fill="#c6c6c6" />
        <path d="M806 226l261 151-304 176-262-150z" fill="#fff" />
      </g>
      {[[786, 287], [697, 339], [608, 390], [961, 388], [783, 491], [872, 439]].map(([x, y]) => (
        <Screw key={x} x={x} y={y} />
      ))}

      {/* locating ring */}
      <g stroke="#000" strokeWidth="1.600">
        <path d="M723 379v11c0 19 28 35 62 35s61-16 61-35v-11z" fill="#007a62" />
        <ellipse cx="784.500" cy="379" rx="61.500" ry="34.500" fill="#00bf95" />
        <ellipse cx="785" cy="379.500" rx="43.500" ry="25" fill="#006a55" strokeWidth="3" />
        <g clipPath="url(#bore)">
          <ellipse cx="785" cy="393" rx="43.500" ry="24" fill="#fff" />
          <ellipse cx="784" cy="404" rx="24" ry="10.500" fill="#9ad02c" />
          <ellipse cx="771" cy="401" rx="5" ry="3" fill="#222" />
        </g>
        <ellipse cx="785" cy="379.500" rx="43.500" ry="25" fill="none" strokeWidth="2.500" />
        <ellipse cx="747.500" cy="357" rx="6" ry="4" fill="#1a3424" strokeWidth="2" />
        <ellipse cx="822" cy="400" rx="6" ry="4" fill="#1a3424" strokeWidth="2" />
      </g>

      {/* work coordinate system */}
      <g>
        <path d="M784.500 471v-38" stroke="#3c50a8" strokeWidth="1.500" />
        <path d="M781 441l3.500-12 3.500 12z" fill="#4a5ac0" />
        <path d="M787 474l30-17" stroke="#8abf8a" strokeWidth="1.500" />
        <path d="M787 477l37 22-16-3z" fill="#dc8c94" stroke="#b85a64" strokeWidth="0.800" />
      </g>

      {/* selected solid */}
      <g fill="none" stroke="#ffa148" strokeLinejoin="round" strokeLinecap="round">
        <path d="M778 448l55-33 54 33-54 33z" fill="#ffa148" strokeWidth="7" />
        <ellipse cx="832" cy="440" rx="26" ry="13.500" fill="#fff" stroke="none" />
        <path d="M833 426v3" strokeWidth="9" />
        <path d="M781 449v5M885 449v5M833 462v21" strokeWidth="8" />
        <path d="M792 452l36 21M794 459l33 19M874 452l-36 21M872 459l-33 19" stroke="#fff" strokeWidth="1.500" />
        <path d="M801 441l0 3M865 441l0 3" stroke="#fff" strokeWidth="1.500" />
      </g>
      <AxisLabel x="788" y="428" fill="#2c5cff">ZC</AxisLabel>
      <AxisLabel x="809" y="448" fill="#3c8c44">YC</AxisLabel>
      <AxisLabel x="808" y="511" fill="#cc2a30">XC</AxisLabel>

      {/* view triad */}
      <g>
        <path d="M378 744l15 9v17l-15 9-15-9v-17z" fill="#b2b2b2" />
        <path d="M378 744v35M363 753l30 17M363 770l30-17" stroke="#d8d8d8" strokeWidth="0.800" />
        <path d="M363 769l31-19" stroke="#4a9a4a" />
        <path d="M363 769v-22" stroke="#1440d8" strokeWidth="2.500" />
        <path d="M360 750l3-8 3 8z" fill="#1440d8" />
        <path d="M364 770l18 9" stroke="#c8202a" strokeWidth="3" />
        <path d="M381 775l8 8-10-1z" fill="#e02a30" />
        <circle cx="363" cy="769.500" r="4.500" fill="#e4e4e4" />
        <AxisLabel x="359" y="742" fill="#1a50f0">Z</AxisLabel>
        <AxisLabel x="388" y="791" fill="#e0303a">X</AxisLabel>
      </g>
    </Scene>
  );
}

const TABS = [
  { icon: "tabAssembly" },
  { icon: "tabConstraint" },
  { icon: "tabPart", active: true },
  { icon: "tabBook" },
  { icon: "tabSignal", gap: true },
  { icon: "tabPage", gap: true },
  { icon: "clock", gap: true },
  { icon: "tabRoles" },
  { icon: "tabWand" },
  { icon: "tabWandBlue" },
  { icon: "tabPeople" },
  { icon: "tabPhoto" },
];

function Navigator() {
  const [selected, setSelected] = useState(0);
  const [hidden, setHidden] = useState([]);

  const toggle = (i) =>
    setHidden(hidden.includes(i) ? hidden.filter((n) => n !== i) : [...hidden, i]);

  return (
    <Panel>
      <PanelTitle>
        <Icon name="pushpin" size={12} />
        部件导航器
      </PanelTitle>
      <TreeBox>
        <TreeTable>
          <thead>
            <tr>
              <NameHead>
                名称
                <svg width="10" height="5" viewBox="0 0 10 5" aria-hidden="true">
                  <path d="M5 0l5 5H0z" />
                </svg>
              </NameHead>
              <th>附注</th>
            </tr>
          </thead>
          <tbody>
            {ROOTS.map((root) => (
              <tr key={root.name}>
                <td>
                  <RootCell>
                    <Expander aria-label={root.name}>{root.open ? "−" : "+"}</Expander>
                    <Icon name={root.icon} size={16} />
                    {root.extra && <Icon name={root.extra} size={16} />}
                    <span>{root.name}</span>
                  </RootCell>
                </td>
                <td />
              </tr>
            ))}
            {FEATURES.map((feature, i) => (
              <FeatureRow key={i} $selected={selected === i} onClick={() => setSelected(i)}>
                <td>
                  <FeatureCell>
                    <Branch />
                    <Check
                      type="checkbox"
                      id={`feature-${i}`}
                      checked={!hidden.includes(i)}
                      onChange={() => toggle(i)}
                    />
                    <Icon name={feature.icon} size={16} />
                    <FeatureName htmlFor={`feature-${i}`} $selected={selected === i}>
                      <Text>{feature.name}</Text>
                    </FeatureName>
                  </FeatureCell>
                </td>
                <td />
              </FeatureRow>
            ))}
          </tbody>
        </TreeTable>
        <VScroll>
          <VHead />
          <ScrollArrow aria-label="上移">
            <svg width="7" height="4" viewBox="0 0 7 4"><path d="M3.500 0L7 4H0z" /></svg>
          </ScrollArrow>
          <VThumb />
          <ScrollArrow $end aria-label="下移">
            <svg width="7" height="4" viewBox="0 0 7 4"><path d="M3.500 4L7 0H0z" /></svg>
          </ScrollArrow>
        </VScroll>
        <HScroll>
          <ScrollArrow aria-label="左移">
            <svg width="4" height="7" viewBox="0 0 4 7"><path d="M0 3.500L4 0v7z" /></svg>
          </ScrollArrow>
          <HThumb><i /><i /><i /></HThumb>
          <ScrollArrow aria-label="右移">
            <svg width="4" height="7" viewBox="0 0 4 7"><path d="M4 3.500L0 0v7z" /></svg>
          </ScrollArrow>
        </HScroll>
      </TreeBox>
      <Splitter>
        <hr />
        <span />
        <hr />
      </Splitter>
    </Panel>
  );
}

function App() {
  const snaps = ["endPoint", "midPoint", "knot", "cross", "center", "quadrant", "existing", "onCurve", "onFace"];
  const [pressed, setPressed] = useState(["endPoint", "midPoint", "center", "existing", "onCurve"]);

  const toggleSnap = (name) =>
    setPressed(pressed.includes(name) ? pressed.filter((n) => n !== name) : [...pressed, name]);

  return (
    <Window>
      <GlobalStyle />
      <TitleBar>
        <h1>NX 8.5 - 建模 - [zhuangpeitu_UG7.5.prt （ 修改的 ） ]</h1>
        <Brand>SIEMENS</Brand>
        <CaptionButton aria-label="最小化">
          <svg width="12" height="12" viewBox="0 0 12 12"><path d="M2 8h7v3H2z" fill="#fff" /></svg>
        </CaptionButton>
        <CaptionButton aria-label="还原">
          <svg width="12" height="12" viewBox="0 0 12 12">
            <path d="M4 3V1h7v7H9M1 4h7v6H1z" fill="none" stroke="#fff" strokeWidth="1.500" />
          </svg>
        </CaptionButton>
        <CaptionButton $close aria-label="关闭">
          <svg width="12" height="12" viewBox="0 0 12 12">
            <path d="M1 1l10 10M11 1L1 11" stroke="#fff" strokeWidth="2.500" />
          </svg>
        </CaptionButton>
        <Blob $x={136} />
        <Blob $x={334} />
        <Blob $x={510} />
      </TitleBar>

      <MenuBar>
        <Icon name="menuDot" />
        {MENUS.map(([label, key]) => (
          <MenuButton key={label}>
            <Text>{label}</Text>
            {key && <Latin>(<u>{key}</u>)</Latin>}
          </MenuButton>
        ))}
        <DocButtons>
          <DocButton aria-label="最小化文档">
            <svg width="11" height="11" viewBox="0 0 11 11"><path d="M2 8h6v2H2z" fill="#555" /></svg>
          </DocButton>
          <DocButton aria-label="还原文档">
            <svg width="11" height="11" viewBox="0 0 11 11">
              <path d="M3 3V1h7v6H8M1 4h7v6H1zM1 5h7" fill="none" stroke="#555" strokeWidth="1.500" />
            </svg>
          </DocButton>
          <DocButton aria-label="关闭文档">
            <svg width="11" height="11" viewBox="0 0 11 11">
              <path d="M2 2l7 7M9 2L2 9" stroke="#555" strokeWidth="2.500" />
            </svg>
          </DocButton>
        </DocButtons>
      </MenuBar>

      <ToolRow $pad={6}>
        <Group>
          <TextButton>
            <Icon name="app" size={28} />
            开始
          </TextButton>
          <Tools items={["v", "newFile", "open", "save", "|", "cut", "copy", "paste", "remove", "|", "undo", "redo", "|"]} />
          <TextButton $wide>
            <Icon name="finder" />
            命令查找器
          </TextButton>
          <Tools items={["seat", "v"]} />
          <End />
        </Group>
        <Group>
          <Grip />
          <Tools items={["fit", "v", "seat", "v", "cube", "v", "frame", "v", "|", "planeFlags", "planeArrow"]} />
          <End />
        </Group>
        <Group>
          <Grip />
          <Tools items={["palette", "|", "flagDiamond", "v", "|", "measure", "v", "ruler"]} />
          <End />
        </Group>
      </ToolRow>

      <ToolRow $tall $pad={9}>
        <Group>
          <BigTool icon="datumPlane" label="基准平面" />
          <Drop />
          <BigTool icon="extrude" label="拉伸" />
          <Drop />
          <BigTool icon="hole" label="孔" />
          <BigTool icon="thread" label="螺纹" />
          <Divider />
          <BigTool icon="pattern" label="阵列特征" />
          <Drop />
          <BigTool icon="unite" label="求和" />
          <Drop />
          <BigTool icon="trim" label="修剪体" />
          <Drop />
          <BigTool icon="shell" label="抽壳" />
          <Space $w={32} />
          <Overflow chevron />
        </Group>
        <Group>
          <Grip />
          <BigTool icon="offset" label="偏置区域" />
          <Drop />
          <BigTool icon="deleteFace" label="删除面" />
          <Overflow />
        </Group>
        <Group>
          <Grip />
          <Tools items={["pinTick", "pinTree", "pinTable", "csys"]} />
          <Overflow />
        </Group>
        <Grip />
        <BigTool icon="sphere" label="真实着色" />
        <BigTool icon="metal" label="光亮金属刷色" disabled />
        <Drop />
        <BigTool icon="plastic" label="红色高泽塑料" disabled />
        <Drop />
        <BigTool icon="noReflect" label="无全局反射图" disabled />
        <Drop />
        <BigTool icon="gradientBg" label="渐变深灰色背景" disabled />
        <Drop />
        <Overflow chevron edge />
      </ToolRow>

      <ToolRow $pad={9}>
        <Group>
          <Tools items={["group", "layers", "layerList", "|", "tag", "|", "bodyTick", "sketchTick", "cubeTick", "|", "rename"]} />
          <End />
        </Group>
        <Group>
          <Grip />
          <Tools items={["sweep", "variational", "pointer"]} />
          <End />
        </Group>
        <Group>
          <Grip />
          <Tools items={["coil", "tension", "disc", "|", "springEdit"]} />
          <End />
        </Group>
        <Space $w={93} />
        <Group>
          <Grip />
          <Tools items={["triangle", "gridTriangle", "folderPoints", "folderCircles"]} />
          <End />
        </Group>
        <Space $w={31} />
        <Group>
          <Grip />
          <Tools items={["lockCubes", "lockCubes"]} />
          <End />
        </Group>
      </ToolRow>

      <SelectionRow>
        <Combo $w={110}>
          <select aria-label="类型过滤器" defaultValue="none">
            <option value="none">没有选择过滤器</option>
          </select>
          <svg width="11" height="6" viewBox="0 0 11 6"><path d="M0 0h11L5.500 6z" /></svg>
        </Combo>
        <Combo $w={116}>
          <select aria-label="选择范围" defaultValue="all">
            <option value="all">整个装配</option>
          </select>
          <svg width="11" height="6" viewBox="0 0 11 6"><path d="M0 0h11L5.500 6z" /></svg>
        </Combo>
        {["greyLink", "|", "greyFilter", "snap", "browse", "|", "house", "glassCube", "|"].map((name, i) =>
          name === "|" ? (
            <Divider key={i} />
          ) : (
            <SmallButton key={i} aria-label={name}>
              <Icon name={name} size={18} />
            </SmallButton>
          )
        )}
        {snaps.map((name) => (
          <SmallButton
            key={name}
            aria-label={name}
            aria-pressed={pressed.includes(name)}
            $on={pressed.includes(name)}
            onClick={() => toggleSnap(name)}
          >
            <Icon name={name} size={18} />
          </SmallButton>
        ))}
        <Divider />
        <SmallButton aria-label="gridSnap">
          <Icon name="gridSnap" size={18} />
        </SmallButton>
        <RowEnd>
          <End />
        </RowEnd>
      </SelectionRow>

      <PromptRow>
        <Cue><Text>选择对象并使用 MB3，或者双击某一对象</Text></Cue>
        <Status><Text>体 (0) 已选定</Text></Status>
        <Cell />
        <Cell $wide />
        <Cell $icons>
          <Icon name="trackGrey" size={16} />
          <Icon name="screen" size={16} />
        </Cell>
      </PromptRow>

      <Main>
        <TabStrip>
          {TABS.map((tab) => (
            <Tab key={tab.icon} $active={tab.active} $gap={tab.gap} aria-label={tab.icon}>
              <Icon name={tab.icon} />
            </Tab>
          ))}
        </TabStrip>
        <Navigator />
        <Viewport>
          <MoldModel />
        </Viewport>
      </Main>

      <BottomRow>
        <Group>
          <Tools items={["greyCubes", "addComp", "moveComp", "mirror", "|", "threeCubes"]} />
          <End />
        </Group>
        <Progress />
      </BottomRow>
    </Window>
  );
}

export default App;

const GlobalStyle = createGlobalStyle`
  * {
    box-sizing: border-box;
  }
  body {
    margin: 0;
    overflow: hidden;
    background: #000;
    color: #000;
    font: 12px/16px "Noto Sans CJK SC", sans-serif;
  }
  button, select, input {
    margin: 0;
    padding: 0;
    border: 0;
    background: none;
    color: inherit;
    font: inherit;
  }
  svg {
    display: block;
    flex: none;
  }
`;

/* The application frame reaches past the top, left and right screen edges */
const Window = styled.div`
  display: flex;
  flex-direction: column;
  margin: -14px -6px 0 -20px;
  min-height: calc(100vh + 14px);
`;

const Latin = styled.span`
  font-family: "DejaVu Sans Mono", monospace;
  font-size: 10px;
  white-space: pre;
`;

const TitleBar = styled.header`
  position: relative;
  display: flex;
  align-items: flex-start;
  gap: 4px;
  height: 28px;
  padding: 8px 2px 0 26px;
  overflow: hidden;
  background: #1c1c1c;
  color: #e6e6e6;

  h1 {
    flex: 1;
    margin: 0;
    font: 12px/20px "Open Sans", "Noto Sans CJK SC", sans-serif;
    white-space: pre;
  }
`;

const Brand = styled.strong`
  margin-right: 25px;
  color: #fff;
  font: bold 12px/20px "DejaVu Sans", sans-serif;
`;

const CaptionButton = styled.button`
  display: flex;
  align-items: flex-end;
  justify-content: center;
  width: 18px;
  height: 18px;
  padding-bottom: 3px;
  border-radius: 3px;
  background: ${(props) => (props.$close ? "#e04a2c" : "#55555a")};
`;

const Blob = styled.i`
  position: absolute;
  top: 4px;
  left: ${(props) => props.$x}px;
  width: 12px;
  height: 12px;
  border-radius: 6px;
  background: #c8c8c8;
`;

const MenuBar = styled.nav`
  display: flex;
  align-items: center;
  gap: 13px;
  height: 23px;
  padding-right: 7px;
  border-top: 1px solid #fff;
  background: #e4e4e4;

  > svg {
    margin-right: -6px;
  }
`;

const MenuButton = styled.button`
  white-space: nowrap;
`;

const DocButtons = styled.div`
  display: flex;
  gap: 3px;
  margin-left: auto;
`;

const DocButton = styled.button`
  display: flex;
  align-items: center;
  justify-content: center;
  width: 16px;
  height: 16px;
  border: 1px solid #777;
  border-radius: 3px;
  background: #f4f4f4;
`;

const ToolRow = styled.div`
  display: flex;
  height: ${(props) => (props.$tall ? 63 : 34)}px;
  padding-left: ${(props) => props.$pad}px;
  border-top: 1px solid #f6f6f6;
  border-bottom: 1px solid #b4b4b4;
  background: ${(props) =>
    props.$tall ? "linear-gradient(#dcdcdc, #cfd3cf)" : "#d8d9d8"};
`;

const Group = styled.div`
  display: flex;
  flex: none;
  border-right: 1px solid #fff;
  box-shadow: inset -1px 0 #b8b8b8;
`;

const Grip = styled.span`
  flex: none;
  width: 8px;
  margin: 5px 0;
  background: repeating-linear-gradient(#a0a0a0 0 2px, transparent 2px 4px) 4px 0 / 2px 100% no-repeat;
`;

const Divider = styled.span`
  flex: none;
  width: 6px;
  margin: 3px 0;
  background: linear-gradient(90deg, #b8b8b8 50%, #fff 50%) 2px 0 / 2px 100% no-repeat;
`;

const Space = styled.span`
  flex: none;
  width: ${(props) => props.$w}px;
`;

const ToolButton = styled.button`
  display: flex;
  flex: none;
  align-items: center;
  justify-content: center;
  width: 31px;
`;

const TextButton = styled.button`
  display: flex;
  flex: none;
  align-items: center;
  gap: ${(props) => (props.$wide ? 4 : 5)}px;
  padding: ${(props) => (props.$wide ? "0 4px" : "0")};
  white-space: nowrap;
`;

const DropButton = styled.button`
  display: flex;
  flex: none;
  align-items: center;
  justify-content: center;
  width: 12px;
`;

const EndButton = styled(DropButton)`
  align-items: flex-end;
  padding-bottom: 7px;
`;

const OverflowButton = styled.button`
  display: flex;
  flex: none;
  flex-direction: column;
  align-items: center;
  justify-content: space-between;
  width: 12px;
  padding-bottom: 7px;
  margin-left: ${(props) => (props.$edge ? "auto" : "0")};
  margin-right: ${(props) => (props.$edge ? "4px" : "0")};

  span {
    font: bold 14px/12px "Liberation Sans", sans-serif;
  }
`;

const BigButton = styled.button`
  display: flex;
  flex: none;
  flex-direction: column;
  align-items: center;
  gap: 4px;
  width: 60px;
  padding-top: 5px;
  line-height: 12px;
  text-align: center;

  span {
    max-width: 50px;
    white-space: ${(props) => (props.disabled ? "normal" : "nowrap")};
    color: ${(props) => (props.disabled ? "#979797" : "#000")};
  }
`;

const SelectionRow = styled.div`
  display: flex;
  align-items: stretch;
  height: 28px;
  padding: 2px 4px 2px 6px;
  border-top: 2px solid #a8a8a8;
  background: #d3d5d3;

  ${DropButton} {
    padding-bottom: 4px;
  }
`;

const Combo = styled.div`
  position: relative;
  flex: none;
  width: ${(props) => props.$w}px;
  margin: 2px 0 3px;
  border: 1px solid #fff;
  background: #fff;

  & + & {
    margin-left: 8px;
    margin-right: 5px;
  }
  select {
    display: block;
    width: 100%;
    height: 16px;
    padding-left: 1px;
    appearance: none;
    line-height: 16px;
    background: linear-gradient(#d4e8fc, #5c9ce4) right / 16px 100% no-repeat;
  }
  svg {
    position: absolute;
    top: 5px;
    right: 3px;
    pointer-events: none;
  }
`;

const SmallButton = styled.button`
  display: flex;
  flex: none;
  align-items: center;
  justify-content: center;
  width: 23px;
  ${(props) =>
    props.$on &&
    css`
      border: 1px solid #555;
      border-radius: 2px;
      background: #fff;
    `}
`;

const RowEnd = styled.div`
  display: flex;
  margin-left: auto;
`;

const PromptRow = styled.div`
  display: flex;
  height: 22px;
  border-top: 1px solid #fff;
  border-bottom: 1px solid #888;
  background: #d9d9d9;
  font-size: 13px;
  font-weight: bold;
  line-height: 19px;

  ${Latin} {
    font-size: 12px;
  }
`;

const Cue = styled.div`
  flex: none;
  width: 590px;
  padding-left: 2px;
  border-right: 1px solid #fff;
`;

const Status = styled.div`
  flex: 1;
  padding-left: 3px;
`;

const Cell = styled.div`
  display: flex;
  align-items: center;
  gap: 4px;
  width: ${(props) => (props.$icons ? 42 : props.$wide ? 36 : 20)}px;
  padding-left: ${(props) => (props.$icons ? 1 : 0)}px;
  border-left: 1px solid #fff;
  box-shadow: inset 1px 0 #c0b8c0;
`;

const Main = styled.main`
  display: flex;
  flex: 1;
`;

const TabStrip = styled.div`
  display: flex;
  flex: none;
  flex-direction: column;
  gap: 2px;
  width: 34px;
  padding-top: 17px;
  border-right: 1px solid #777;
  background: #a3a3a3;
`;

const Tab = styled.button`
  display: flex;
  align-items: center;
  justify-content: flex-end;
  height: 40px;
  margin-top: ${(props) => (props.$gap ? 12 : 0)}px;
  padding-right: 1px;
  border: 1px solid #6c6c6c;
  border-left: 0;
  background: #dcdcdc;
  ${(props) =>
    props.$active &&
    css`
      margin-right: -1px;
      border: 0;
      background: #ececec;
    `}
`;

const Panel = styled.section`
  display: flex;
  flex: none;
  flex-direction: column;
  width: 298px;
  padding: 4px 9px 0;
  border-right: 2px solid #777;
  border-bottom: 2px solid #888;
  background: #ececec;
`;

const PanelTitle = styled.h2`
  display: flex;
  align-items: center;
  gap: 13px;
  margin: 0;
  padding-left: 5px;
  font-size: 13px;
  line-height: 27px;
`;

const TreeBox = styled.div`
  display: grid;
  grid-template-columns: 1fr 18px;
  grid-template-rows: auto 17px;
  border: 1px solid #666;
  background: #f0f0f0;
`;

const TreeTable = styled.table`
  width: 100%;
  align-self: start;
  border-collapse: separate;
  border-spacing: 0;
  table-layout: fixed;
  background: #fff;
  color: #222;

  th {
    height: 17px;
    padding: 0 5px;
    border-right: 1px solid #bbb;
    border-bottom: 1px solid #999;
    background: linear-gradient(#f4f4f4, #d8d8d8);
    font-weight: normal;
    line-height: 16px;
    text-align: left;
  }
  th:last-child {
    border-right: 0;
  }
  td {
    height: 20px;
    padding: 0;
    border-bottom: 1px dashed #d0d0d0;
  }
  td:first-child {
    border-right: 1px solid #ddd;
  }
  tbody tr:nth-child(odd) {
    background: #f5f5f5;
  }
`;

const NameHead = styled.th`
  width: 201px;

  && {
    padding-left: 6px;
  }
  svg {
    display: inline-block;
    margin-left: 16px;
    vertical-align: 2px;
  }
`;

const RootCell = styled.div`
  display: flex;
  align-items: center;
  height: 19px;
  padding-left: 5px;

  span {
    padding-left: 2px;
  }
`;

const Expander = styled.button`
  width: 9px;
  height: 9px;
  margin-right: 6px;
  border: 1px solid #999;
  background: #fff;
  font: 9px/7px "DejaVu Sans", sans-serif;
`;

const FeatureRow = styled.tr`
  ${(props) =>
    props.$selected &&
    css`
      td:last-child {
        background: #3399ff;
      }
    `}
`;

const FeatureCell = styled.div`
  display: flex;
  align-items: center;
  height: 19px;
  padding-left: 29px;
`;

const Branch = styled.span`
  align-self: stretch;
  width: 12px;
  border-left: 1px dotted #888;
  background: repeating-linear-gradient(90deg, #999 0 1px, transparent 1px 2px) 0 10px / 9px 1px no-repeat;
`;

const Check = styled.input`
  flex: none;
  width: 12px;
  height: 12px;
  margin-right: 2px;
  appearance: none;
  border: 1px solid #000;
  background: #fff;

  &:checked::before {
    content: "";
    display: block;
    width: 10px;
    height: 10px;
    background: #12b428;
    clip-path: polygon(0 50%, 20% 36%, 40% 56%, 80% 0, 100% 15%, 42% 100%);
  }
`;

const FeatureName = styled.label`
  flex: 1;
  height: 19px;
  padding-left: 3px;
  line-height: 19px;
  ${(props) =>
    props.$selected &&
    css`
      background: #3399ff;
      color: #fff;
    `}
`;

const VScroll = styled.div`
  display: flex;
  flex-direction: column;
  align-items: stretch;
  background: #efefef;
`;

const VHead = styled.div`
  height: 17px;
  border-bottom: 1px solid #999;
  background: linear-gradient(#f4f4f4, #d8d8d8);
`;

const ScrollArrow = styled.button`
  display: flex;
  flex: none;
  align-items: center;
  justify-content: center;
  min-width: 17px;
  height: 18px;
  margin-top: ${(props) => (props.$end ? "auto" : "0")};
`;

const VThumb = styled.div`
  height: 17px;
  margin: 2px 2px 0 1px;
  border: 1px solid #999;
  background: linear-gradient(90deg, #f4f4f4, #d0d0d0);
`;

const HScroll = styled.div`
  display: flex;
  grid-column: 1 / -1;
  align-items: center;
  padding: 0 19px 0 2px;
  background: #eee;

  > button:last-child {
    margin-left: auto;
  }
`;

const HThumb = styled.div`
  display: flex;
  align-items: center;
  justify-content: center;
  gap: 2px;
  width: 188px;
  height: 15px;
  border: 1px solid #8c8c8c;
  background: linear-gradient(#f0f0f0, #c4c4c4);

  i {
    width: 1px;
    height: 6px;
    background: #444;
  }
`;

const Splitter = styled.div`
  display: flex;
  align-items: center;
  gap: 5px;
  height: 12px;

  hr {
    flex: 1;
    margin: 0;
    border: 0;
    border-top: 1px solid #aaa;
  }
  span {
    width: 50px;
    height: 5px;
    border: 1px solid #aaa;
    background: #ccc;
  }
`;

const Viewport = styled.div`
  display: flex;
  flex: 1;
  min-width: 0;
  margin-right: 6px;
  background: #000;
`;

const Scene = styled.svg`
  flex: 1;
  min-width: 0;
  width: 100%;
`;

const AxisLabel = styled.text`
  font-family: "Open Sans", sans-serif;
  font-size: 12px;
`;

const BottomRow = styled.footer`
  display: flex;
  justify-content: space-between;
  height: 30px;
  border-top: 2px solid #f6f6f6;
  background: #dadada;

  ${Group} {
    padding-left: 9px;
  }
  ${EndButton} {
    padding-bottom: 3px;
  }
`;

const Progress = styled.div`
  align-self: flex-end;
  width: 40px;
  height: 2px;
  margin-right: 128px;
  background: #3a8ee6;
`;
